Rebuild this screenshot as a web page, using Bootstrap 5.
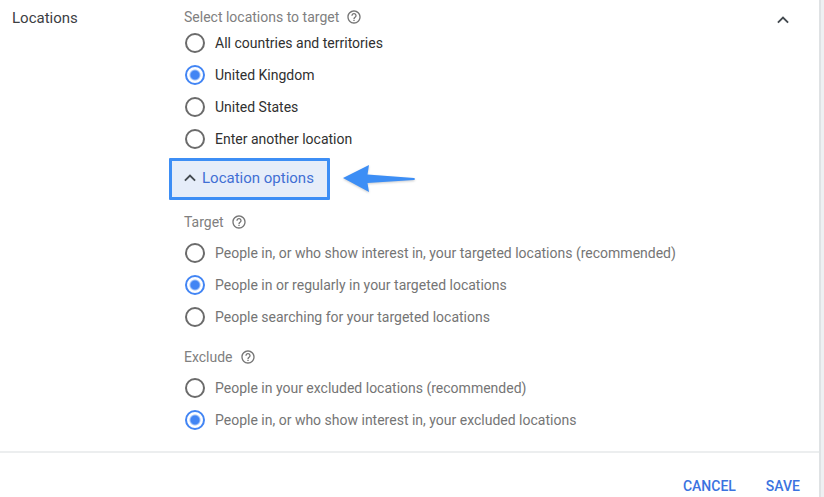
<!DOCTYPE html>
<html lang="en">
<head>
<meta charset="utf-8">
<meta name="viewport" content="width=device-width, initial-scale=1">
<title>Locations</title>
<link href="https://cdn.jsdelivr.net/npm/bootstrap@5.3.0/dist/css/bootstrap.min.css" rel="stylesheet">
<style>
body { font-family: Roboto, "Liberation Sans", sans-serif; font-size: 14px; line-height: 20px; color: #3c4043; background: #eef0f2; }
.panel { margin-right: 3px; border-right: 2px solid #dfe2e4; background: #fff; }
.title-col { width: 184px; padding: 8px 0 0 12px; }
.title-col h1 { font-size: 15px; line-height: 20px; margin: 0; }
.group-title { font-size: 14px; line-height: 20px; color: #808080; gap: 7px; }
.option { height: 32px; gap: 10px; padding-left: 1px; color: #303030; }
.soft .option { color: #757575; }
.option .form-check-input { width: 20px; height: 20px; margin: 0; border: 2px solid #6b6b6b; background: #fff; box-shadow: none; }
.option .form-check-input:checked { border-color: #4285f4; background: radial-gradient(circle, #4285f4 0 4px, #fff 6px); }
.help { color: #757575; line-height: 0; }
.select-block { padding-top: 7px; }
.toggle-row { margin: 3px 0 0 -15px; gap: 12px; }
.toggle { width: 161px; height: 42px; border: 3px solid #3d8ef5; border-radius: 1px; background: #e6edf9; color: #416fd4; font-size: 15px; line-height: 20px; gap: 6px; padding: 0 0 2px 12px; }
.toggle:hover { background: #e6edf9; border-color: #3d8ef5; color: #416fd4; }
.toggle svg, .collapse-btn { color: #444a50; }
.pointer { filter: drop-shadow(0 1px 1px rgba(0, 0, 0, .2)); }
.collapse-btn { margin: 14px 30px 0 0; line-height: 0; }
.target-block { padding-top: 12px; }
.exclude-block { padding: 14px 0 15px; }
.soft .options { padding-top: 5px; }
.actions { border-top: 2px solid #eceeef; padding: 23px 19px 1px; gap: 30px; }
.action { color: #3b73e0; font-size: 14px; line-height: 20px; font-weight: 500; }
</style>
<script src="https://cdn.jsdelivr.net/npm/bootstrap@5.3.0/dist/js/bootstrap.bundle.min.js"></script>
</head>
<body>
<svg class="d-none" aria-hidden="true">
  <symbol id="help-icon" viewBox="0 0 24 24"><path fill="currentColor" d="M11 18h2v-2h-2v2zm1-16C6.480 2 2 6.480 2 12s4.480 10 10 10 10-4.480 10-10S17.520 2 12 2zm0 18c-4.410 0-8-3.590-8-8s3.590-8 8-8 8 3.590 8 8-3.590 8-8 8zm0-14c-2.210 0-4 1.790-4 4h2c0-1.100.9-2 2-2s2 .9 2 2c0 2-3 1.750-3 5h2c0-2.250 3-2.500 3-5 0-2.210-1.790-4-4-4z"/></symbol>
  <symbol id="chevron-up" viewBox="0 0 12 12"><path d="M.9 8.600 6 3.500l5.100 5.100" fill="none" stroke="currentColor" stroke-width="1.900"/></symbol>
</svg>
<main class="panel min-vh-100">
  <form>
    <div class="d-flex align-items-start">
      <div class="title-col flex-shrink-0"><h1 class="fw-normal">Locations</h1></div>
      <div class="flex-grow-1">
        <div class="select-block" role="radiogroup" aria-labelledby="select-title">
          <div class="group-title d-flex align-items-center">
            <span id="select-title">Select locations to target</span>
            <button type="button" class="help btn border-0 p-0" aria-label="Help on locations"><svg width="16" height="16"><use href="#help-icon"/></svg></button>
          </div>
          <div class="options">
            <div class="option d-flex align-items-center"><input class="form-check-input" type="radio" name="location" id="loc-all"><label for="loc-all">All countries and territories</label></div>
            <div class="option d-flex align-items-center"><input class="form-check-input" type="radio" name="location" id="loc-uk" checked><label for="loc-uk">United Kingdom</label></div>
            <div class="option d-flex align-items-center"><input class="form-check-input" type="radio" name="location" id="loc-us"><label for="loc-us">United States</label></div>
            <div class="option d-flex align-items-center"><input class="form-check-input" type="radio" name="location" id="loc-other"><label for="loc-other">Enter another location</label></div>
          </div>
        </div>
        <div class="toggle-row d-flex align-items-center">
          <button type="button" class="toggle btn d-flex align-items-center" data-bs-toggle="collapse" data-bs-target="#location-options" aria-expanded="true" aria-controls="location-options"><svg width="12" height="12" aria-hidden="true"><use href="#chevron-up"/></svg>Location options</button>
          <svg class="pointer" width="75" height="30" viewBox="0 0 75 30" aria-hidden="true"><path d="M1 14 27 1 25.500 10.500 72 14Q74 15 72 16L25.500 19 27 28Z" fill="#3d8ef5"/></svg>
        </div>
        <div class="soft collapse show" id="location-options">
          <div class="target-block" role="radiogroup" aria-labelledby="target-title">
            <div class="group-title d-flex align-items-center">
              <span id="target-title">Target</span>
              <button type="button" class="help btn border-0 p-0" aria-label="Help on target"><svg width="16" height="16"><use href="#help-icon"/></svg></button>
            </div>
            <div class="options">
              <div class="option d-flex align-items-center"><input class="form-check-input" type="radio" name="target" id="target-interest"><label for="target-interest">People in, or who show interest in, your targeted locations (recommended)</label></div>
              <div class="option d-flex align-items-center"><input class="form-check-input" type="radio" name="target" id="target-regular" checked><label for="target-regular">People in or regularly in your targeted locations</label></div>
              <div class="option d-flex align-items-center"><input class="form-check-input" type="radio" name="target" id="target-search"><label for="target-search">People searching for your targeted locations</label></div>
            </div>
          </div>
          <div class="exclude-block" role="radiogroup" aria-labelledby="exclude-title">
            <div class="group-title d-flex align-items-center">
              <span id="exclude-title">Exclude</span>
              <button type="button" class="help btn border-0 p-0" aria-label="Help on exclude"><svg width="16" height="16"><use href="#help-icon"/></svg></button>
            </div>
            <div class="options">
              <div class="option d-flex align-items-center"><input class="form-check-input" type="radio" name="exclude" id="exclude-in"><label for="exclude-in">People in your excluded locations (recommended)</label></div>
              <div class="option d-flex align-items-center"><input class="form-check-input" type="radio" name="exclude" id="exclude-interest" checked><label for="exclude-interest">People in, or who show interest in, your excluded locations</label></div>
            </div>
          </div>
        </div>
      </div>
      <button type="button" class="collapse-btn btn border-0 p-0" aria-label="Collapse"><svg width="12" height="12"><use href="#chevron-up"/></svg></button>
    </div>
    <div class="actions d-flex justify-content-end">
      <button type="button" class="action btn border-0 p-0">CANCEL</button>
      <button type="submit" class="action btn border-0 p-0">SAVE</button>
    </div>
  </form>
</main>
</body>
</html>
